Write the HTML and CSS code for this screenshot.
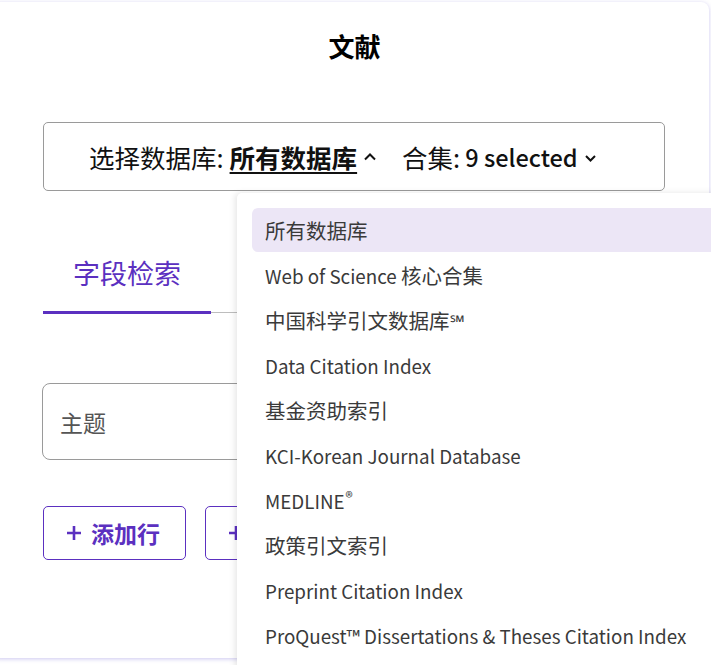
FILE: index.html
```html
<!DOCTYPE html>
<html lang="zh">
<head>
<meta charset="utf-8">
<link rel="stylesheet" href="styles.css">
</head>
<body>
<div class="card">
  <h1 class="title">文献</h1>
  <div class="db-select">
    <span class="lbl">选择数据库:</span>
    <span class="db-current">所有数据库</span>
    <svg class="chev up" width="14" height="10" viewBox="0 0 14 10"><path d="M2 7.5 L7 2.5 L12 7.5" fill="none" stroke="#111" stroke-width="2"/></svg>
    <span class="lbl coll">合集:</span>
    <span class="sel">9 selected</span>
    <svg class="chev down" width="13" height="10" viewBox="0 0 13 10"><path d="M2 3 L6.5 7.5 L11 3" fill="none" stroke="#111" stroke-width="2"/></svg>
  </div>
  <div class="tabs">
    <div class="tab active">字段检索</div>
    <div class="tab">引文检索</div>
  </div>
  <div class="row">
    <div class="field">主题</div>
  </div>
  <div class="actions">
    <button class="btn"><svg width="16" height="16" viewBox="0 0 16 16"><path d="M8 1 V15 M1 8 H15" stroke="#5b30c0" stroke-width="2.6"/></svg><span>添加行</span></button>
    <button class="btn"><svg width="16" height="16" viewBox="0 0 16 16"><path d="M8 1 V15 M1 8 H15" stroke="#5b30c0" stroke-width="2.6"/></svg><span>添加日期范围</span></button>
  </div>
  <ul class="menu">
    <li class="item hl"><span class="cjk">所有数据库</span></li>
    <li class="item">Web of Science <span class="cjk">核心合集</span></li>
    <li class="item"><span class="cjk">中国科学引文数据库</span>℠</li>
    <li class="item">Data Citation Index</li>
    <li class="item"><span class="cjk">基金资助索引</span></li>
    <li class="item">KCI-Korean Journal Database</li>
    <li class="item">MEDLINE<sup>®</sup></li>
    <li class="item"><span class="cjk">政策引文索引</span></li>
    <li class="item">Preprint Citation Index</li>
    <li class="item">ProQuest™ Dissertations &amp; Theses Citation Index</li>
  </ul>
</div>
</body>
</html>
```

FILE: styles.css
```css
html, body {
  margin: 0;
  padding: 0;
  background: #ffffff;
  overflow: hidden;
  width: 711px;
  height: 665px;
}
body {
  font-family: "Noto Sans CJK SC", "Noto Sans", sans-serif;
  color: #111;
}
.card {
  position: relative;
  margin: 2px 2px 0 -8px;
  padding: 28px 0 0 51px;
  height: 628px;
  background: #fff;
  border-radius: 8px;
  box-shadow: 0 1px 4px rgba(110, 95, 210, 0.35);
}
.title {
  margin: 0;
  text-align: center;
  font-size: 26px;
  line-height: 32px;
  font-weight: 700;
  padding-right: 43px;
  color: #000;
}
.db-select {
  margin-top: 60px;
  width: 622px;
  height: 69px;
  border: 1px solid #9a9a9a;
  border-radius: 5px;
  display: flex;
  align-items: center;
  padding-left: 45px;
  box-sizing: border-box;
  font-size: 25.5px;
  color: #111;
}
.db-current {
  font-weight: 700;
  text-decoration: underline;
  text-decoration-thickness: 2px;
  text-underline-offset: 4px;
  margin-left: 6px;
}
.chev { margin-left: 6px; }
.chev.down { margin-left: 6px; margin-top: 2px; }
.coll { margin-left: 25px; }
.sel { margin-left: 5px; font-size: 23.5px; font-weight: 500; }
.tabs {
  margin-top: 46px;
  display: flex;
  border-bottom: 1px solid #bdbdbd;
  width: 700px;
}
.tab {
  width: 168px;
  text-align: center;
  font-size: 27px;
  line-height: 36px;
  padding: 18px 0 20px;
  color: #5b30c0;
}
.tab.active {
  border-bottom: 3px solid #5b30c0;
  margin-bottom: -2px;
}
.row {
  margin-top: 70px;
}
.field {
  width: 300px;
  height: 77px;
  border: 1px solid #9a9a9a;
  border-radius: 8px;
  box-sizing: border-box;
  display: flex;
  align-items: center;
  padding-left: 17px;
  font-size: 23px;
  color: #555;
  margin-left: -1px;
}
.actions {
  margin-top: 46px;
  display: flex;
  gap: 19px;
}
.btn {
  height: 54px;
  width: 143px;
  border: 1px solid #5b30c0;
  border-radius: 5px;
  background: #fff;
  color: #5b30c0;
  font-family: inherit;
  font-size: 23px;
  font-weight: 700;
  display: flex;
  align-items: center;
  gap: 9px;
  padding: 0 0 0 22px;
  white-space: nowrap;
  overflow: hidden;
}
.btn:last-child { width: 220px; }
.menu {
  position: absolute;
  left: 245px;
  top: 191px;
  width: 520px;
  height: 520px;
  margin: 0;
  padding: 15px 0 0 15px;
  list-style: none;
  background: #fff;
  border-radius: 5px;
  box-shadow: -2px 0 6px rgba(0, 0, 0, 0.1);
  box-sizing: border-box;
}
.item {
  height: 45px;
  line-height: 45px;
  padding-left: 13px;
  font-size: 18.8px;
  color: #3a3a3a;
  white-space: nowrap;
}
.item .cjk {
  font-size: 20.5px;
}
.item.hl {
  background: #ece6f6;
  border-radius: 6px;
  height: 44px;
  line-height: 44px;
  margin-bottom: 1px;
}
.item sup {
  font-size: 15px;
  vertical-align: 6px;
  line-height: 0;
  margin-left: 1px;
}
```
